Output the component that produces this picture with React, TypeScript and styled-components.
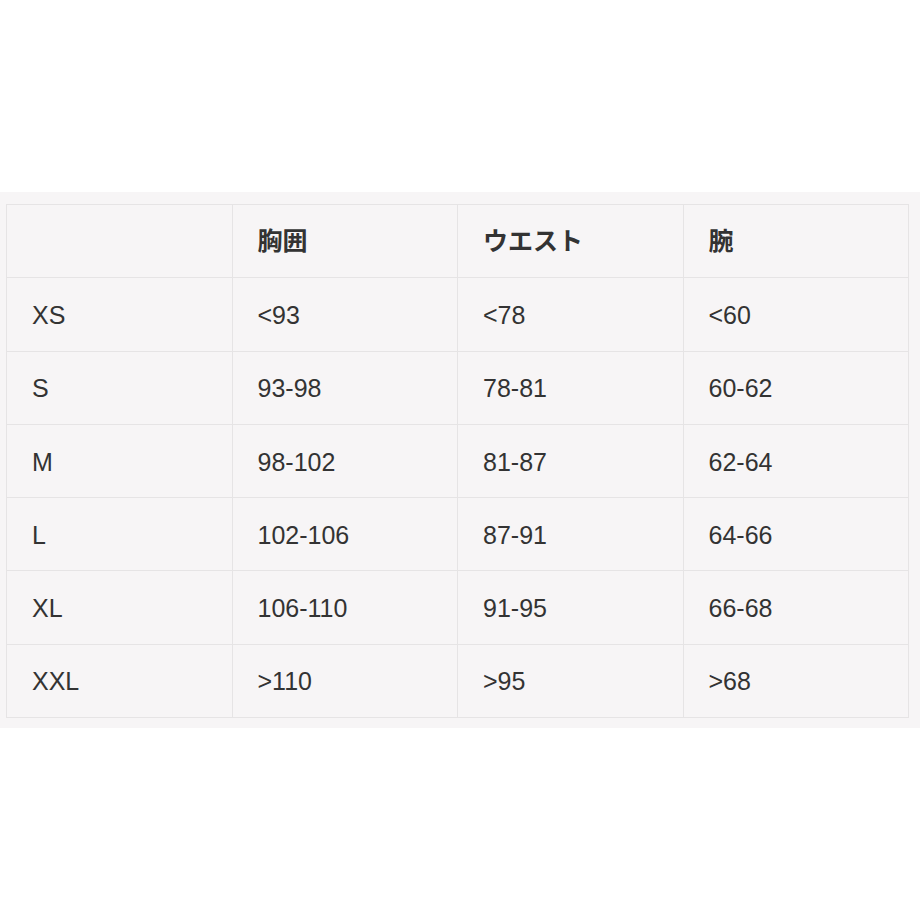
import React from "react";
import styled, { createGlobalStyle } from "styled-components";

const rows: string[][] = [
  ["XS", "<93", "<78", "<60"],
  ["S", "93-98", "78-81", "60-62"],
  ["M", "98-102", "81-87", "62-64"],
  ["L", "102-106", "87-91", "64-66"],
  ["XL", "106-110", "91-95", "66-68"],
  ["XXL", ">110", ">95", ">68"],
];

const headers = ["", "胸囲", "ウエスト", "腕"];

const App = () => {
  return (
    <>
      <GlobalStyle />
      <StyledWrap>
        <StyledTable>
          <thead>
            <StyledRow>
              {headers.map((h, i) => (
                <StyledHead key={i}>{h}</StyledHead>
              ))}
            </StyledRow>
          </thead>
          <tbody>
            {rows.map((r) => (
              <StyledRow key={r[0]}>
                {r.map((c, i) => (
                  <StyledCell key={i}>{c}</StyledCell>
                ))}
              </StyledRow>
            ))}
          </tbody>
        </StyledTable>
      </StyledWrap>
    </>
  );
};

export default App;

const GlobalStyle = createGlobalStyle`
  body {
    margin: 0;
    background: #ffffff;
    font-family: "Liberation Sans", "Noto Sans CJK JP", sans-serif;
  }
`;

const StyledWrap = styled.section`
  margin-top: 192px;
  background: #f7f5f6;
  padding: 12px 11px 10px 6px;
`;

const StyledTable = styled.table`
  width: 903px;
  border-collapse: collapse;
  table-layout: fixed;
  border: 1px solid #e6e4e5;
`;

const StyledRow = styled.tr`
  height: 73.3px;
`;

const StyledHead = styled.th`
  border: 1px solid #e6e4e5;
  padding: 0 25px 5px;
  text-align: left;
  font-family: "Liberation Sans", "Noto Sans CJK JP", sans-serif;
  font-weight: 700;
  font-size: 25px;
  color: #333333;
`;

const StyledCell = styled.td`
  border: 1px solid #e6e4e5;
  padding: 2px 25px 0;
  font-size: 25px;
  color: #333333;
`;
